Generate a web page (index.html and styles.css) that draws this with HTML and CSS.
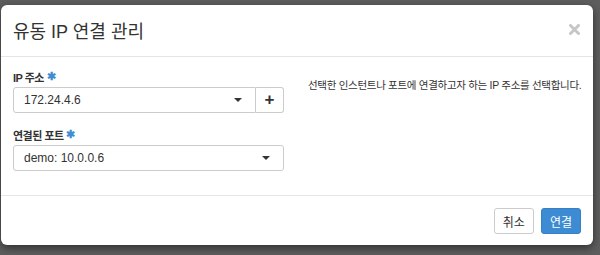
FILE: index.html
```html
<!DOCTYPE html>
<html lang="ko">

<head>
    <meta charset="UTF-8">
    <title>유동 IP 연결 관리</title>
    <link rel="stylesheet" href="styles.css">
</head>

<body>

    <div class="modal">
        <header class="modal-header">
            <h2>유동 IP 연결 관리</h2>
            <button class="luk" aria-label="닫기">
                <svg width="11" height="11" viewBox="0 0 11 11">
                    <path d="M1.5 1.5 L9.5 9.5 M9.5 1.5 L1.5 9.5" stroke="#c6c6c6" stroke-width="3" stroke-linecap="round"/>
                </svg>
            </button>
        </header>

        <section class="modal-body">
            <div class="felter">
                <div class="felt">
                    <label>IP 주소 <span class="krav">&#10033;</span></label>
                    <div class="input-gruppe">
                        <div class="vaelger">
                            <span>172.24.4.6</span>
                            <span class="pil"></span>
                        </div>
                        <button class="plus">+</button>
                    </div>
                </div>
                <div class="felt">
                    <label>연결된 포트 <span class="krav">&#10033;</span></label>
                    <div class="vaelger">
                        <span>demo: 10.0.0.6</span>
                        <span class="pil"></span>
                    </div>
                </div>
            </div>
            <p class="beskrivelse">선택한 인스턴트나 포트에 연결하고자 하는 IP 주소를 선택합니다.</p>
        </section>

        <footer class="modal-footer">
            <button class="knap">취소</button>
            <button class="knap knap-blaa">연결</button>
        </footer>
    </div>

</body>

</html>
```

FILE: styles.css
```css
* {
    font-family: "Liberation Sans", "Noto Sans CJK KR", sans-serif;
    margin: 0;
    padding: 0;
    box-sizing: border-box;
}

body {
    background-color: #5e5e5e;
    color: #333;
    height: 255px;
    overflow: hidden;
}

.modal {
    width: 592px;
    margin: 5px 0 0 1px;
    background: #fff;
    border-radius: 6px;
    box-shadow: 0 3px 9px rgba(0, 0, 0, .5);
}

.modal-header {
    display: flex;
    justify-content: space-between;
    align-items: center;
    height: 52px;
    padding: 0 12px 2px;
    border-bottom: 1px solid #e5e5e5;
}

.modal-header h2 {
    font-size: 18px;
    font-weight: normal;
    color: #333;
}

.luk {
    display: flex;
    border: none;
    background: none;
    margin-right: 1px;
}

.modal-body {
    display: flex;
    gap: 24px;
    padding: 12px 12px 24px;
    border-bottom: 1px solid #e5e5e5;
}

.felter {
    flex: none;
    width: 271px;
    display: flex;
    flex-direction: column;
    gap: 14px;
}

.felt label {
    display: block;
    height: 14px;
    line-height: 14px;
    font-size: 11px;
    letter-spacing: -0.5px;
    font-weight: bold;
    margin-bottom: 4px;
}

.krav {
    color: #3e8ed0;
    font-size: 11px;
    letter-spacing: 0;
    vertical-align: 2px;
}

.input-gruppe {
    display: flex;
}

.vaelger {
    flex: 1;
    height: 26px;
    display: flex;
    justify-content: space-between;
    align-items: center;
    padding: 0 13px 0 10px;
    border: 1px solid #ccc;
    border-radius: 3px;
    font-size: 12px;
    color: #333;
}

.input-gruppe .vaelger {
    border-radius: 3px 0 0 3px;
}

.pil {
    width: 0;
    height: 0;
    border-left: 4px solid transparent;
    border-right: 4px solid transparent;
    border-top: 4px solid #333;
}

.plus {
    width: 28px;
    height: 26px;
    border: 1px solid #ccc;
    border-left: none;
    border-radius: 0 3px 3px 0;
    background: #fff;
    font-size: 17px;
    font-weight: bold;
    color: #333;
}

.beskrivelse {
    font-size: 10.5px;
    letter-spacing: -0.3px;
    white-space: nowrap;
    margin-top: 8px;
}

.modal-footer {
    display: flex;
    justify-content: flex-end;
    gap: 7px;
    padding: 12px 12px 11px;
}

.knap {
    height: 26px;
    padding: 0 8px;
    font-size: 12px;
    border-radius: 3px;
    border: 1px solid #ccc;
    background: #fff;
    color: #333;
}

.knap-blaa {
    background: #3d8bd3;
    border-color: #3580c6;
    color: #fff;
}
```
